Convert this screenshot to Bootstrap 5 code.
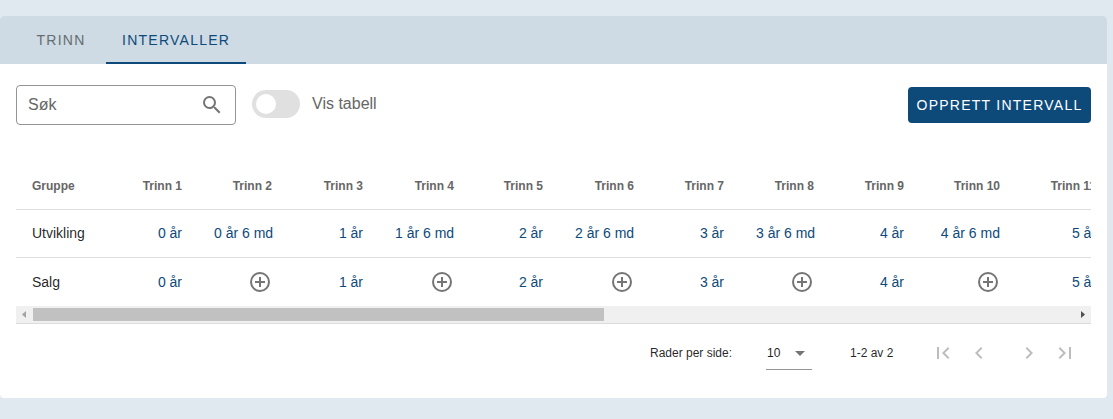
<!DOCTYPE html>
<html lang="no">
<head>
<meta charset="utf-8">
<meta name="viewport" content="width=device-width, initial-scale=1">
<title>Intervaller</title>
<link href="https://cdn.jsdelivr.net/npm/bootstrap@5.3.0/dist/css/bootstrap.min.css" rel="stylesheet">
<style>
  body { background: #e1e9f0; font-family: "Liberation Sans", Arial, sans-serif; color: rgba(0,0,0,.87); overflow: hidden; }
  .panel { width: 1107px; height: 382px; margin-top: 16px; border-radius: 4px; overflow: hidden; }
  .tabbar { height: 48px; background: #cedbe4; }
  .tabbar .nav-link { min-width: 90px; height: 48px; line-height: 48px; padding: 0 16px; text-align: center; font-size: 14px; letter-spacing: 1.25px; color: #666c70; border-radius: 0; }
  .tabbar .nav-link.active { width: 140px; color: #0d4a7a; box-shadow: inset 0 -2px #0d4a7a; }
  .toolbar-row { padding: 21px 16px 0; height: 97px; }
  .search { width: 220px; height: 40px; border: 1px solid #949494; border-radius: 4px; padding: 0 11px; }
  .search input { font-size: 16px; width: 150px; height: 36px; }
  .search input::placeholder { color: #666; opacity: 1; }
  .switch { width: 48px; height: 28px; border-radius: 14px; background: #e0e0e0; padding: 4px; margin: 5px 12px 0 16px; }
  .knob { width: 20px; height: 20px; border-radius: 50%; background: #fff; }
  .switch-label { color: #666; font-size: 16px; line-height: 24px; margin-top: 7px; }
  .btn-create { height: 36px; padding: 0 8px; background: #0d4a7a; color: #fff; border: 0; border-radius: 4px; font-size: 14px; letter-spacing: 1.25px; width: 183px; margin-top: 2px; white-space: nowrap; }
  .btn-create:hover { background: #0d4a7a; color: #fff; }
  .grid-wrap { margin: 0 16px; width: 1075px; border-bottom: 1px solid #dcdcdc; }
  .grid { table-layout: fixed; width: 1096px; border-collapse: separate; border-spacing: 0; font-size: 14px; }
  .grid th, .grid td { height: 48px; padding: 0 16px; text-align: right; white-space: nowrap; vertical-align: middle; border-bottom: 1px solid #dedede; color: #0d4a7a; }
  .grid th { font-size: 12px; font-weight: 700; color: #666; height: 49px; padding-top: 2px; }
  .grid td:first-child, .grid th:first-child { text-align: left; }
  .grid td:first-child { color: rgba(0,0,0,.87); }
  .grid tr:last-child td { border-bottom: 0; }
  .grid td svg { width: 24px; height: 24px; fill: #757575; display: block; margin-left: auto; }
  .track { height: 17px; background: #f0f0f0; }
  .track svg { width: 17px; height: 17px; }
  .thumb { width: 571px; height: 13px; background: #c1c1c1; }
  .pager { height: 74px; padding: 0 16px 0 650px; font-size: 12px; }
  .pager > * { height: 58px; display: flex; align-items: center; }
  .per-page { width: 116px; }
  .rows-select { width: 46px; height: 34px; border-bottom: 1px solid #949494; padding-left: 1px; color: #1f1f1f; }
  .pager svg { width: 24px; height: 24px; fill: #bdbdbd; }
  .pager .rows-select svg { fill: #757575; }
  .range { margin-left: 38px; width: 81px; }
  .arrows svg:nth-child(2) { margin-left: 12px; }
  .arrows svg:nth-child(3) { margin-left: 26px; }
  .arrows svg:nth-child(4) { margin-left: 12px; }
</style>
</head>
<body>
<svg class="d-none">
  <symbol id="plus" viewBox="0 0 24 24"><path d="M11 11V7h2v4h4v2h-4v4h-2v-4H7v-2zM12 2a10 10 0 1 0 0 20 10 10 0 0 0 0-20zm0 18a8 8 0 1 1 0-16 8 8 0 0 1 0 16z"/></symbol>
</svg>
<main class="panel bg-white">
  <nav class="nav tabbar px-3">
    <a class="nav-link" href="#">TRINN</a>
    <a class="nav-link active" href="#">INTERVALLER</a>
  </nav>
  <div class="toolbar-row d-flex align-items-start">
    <div class="search d-flex align-items-center justify-content-between">
      <input class="border-0 p-0 bg-transparent" type="text" placeholder="Søk" aria-label="Søk">
      <svg width="24" height="24" viewBox="0 0 24 24" fill="#757575"><path d="M15.5 14h-.79l-.28-.27A6.47 6.47 0 0 0 16 9.5 6.5 6.5 0 1 0 9.5 16c1.61 0 3.09-.59 4.23-1.57l.27.28v.79l5 4.99L20.49 19l-4.99-5zm-6 0C7.01 14 5 11.99 5 9.5S7.01 5 9.5 5 14 7.01 14 9.5 11.99 14 9.5 14z"/></svg>
    </div>
    <div class="switch"><div class="knob"></div></div>
    <span class="switch-label">Vis tabell</span>
    <button class="btn btn-create ms-auto" type="button">OPPRETT INTERVALL</button>
  </div>
  <div class="grid-wrap overflow-hidden">
    <table class="grid">
      <colgroup>
        <col style="width:91px"><col style="width:91px"><col style="width:90px"><col style="width:91px"><col style="width:91px"><col style="width:89px"><col style="width:91px"><col style="width:90px"><col style="width:90px"><col style="width:90px"><col style="width:96px"><col style="width:96px">
      </colgroup>
      <thead>
        <tr><th>Gruppe</th><th>Trinn 1</th><th>Trinn 2</th><th>Trinn 3</th><th>Trinn 4</th><th>Trinn 5</th><th>Trinn 6</th><th>Trinn 7</th><th>Trinn 8</th><th>Trinn 9</th><th>Trinn 10</th><th>Trinn 11</th></tr>
      </thead>
      <tbody>
        <tr><td>Utvikling</td><td>0 år</td><td>0 år 6 md</td><td>1 år</td><td>1 år 6 md</td><td>2 år</td><td>2 år 6 md</td><td>3 år</td><td>3 år 6 md</td><td>4 år</td><td>4 år 6 md</td><td>5 år</td></tr>
        <tr><td>Salg</td><td>0 år</td><td><svg><use href="#plus"/></svg></td><td>1 år</td><td><svg><use href="#plus"/></svg></td><td>2 år</td><td><svg><use href="#plus"/></svg></td><td>3 år</td><td><svg><use href="#plus"/></svg></td><td>4 år</td><td><svg><use href="#plus"/></svg></td><td>5 år</td></tr>
      </tbody>
    </table>
    <div class="track d-flex align-items-center">
      <svg viewBox="0 0 17 17" fill="#a3a3a3"><path d="M10 5v7L6 8.5z"/></svg>
      <div class="thumb"></div>
      <svg class="ms-auto" viewBox="0 0 17 17" fill="#505050"><path d="M7 5v7l4-3.5z"/></svg>
    </div>
  </div>
  <div class="pager d-flex">
    <span class="per-page">Rader per side:</span>
    <div><div class="rows-select d-flex align-items-center justify-content-between"><span>10</span><svg viewBox="0 0 24 24"><path d="M7 10l5 5 5-5z"/></svg></div></div>
    <span class="range">1-2 av 2</span>
    <div class="arrows">
      <svg viewBox="0 0 24 24"><path d="M18.41 16.59 13.82 12l4.59-4.59L17 6l-6 6 6 6zM6 6h2v12H6z"/></svg>
      <svg viewBox="0 0 24 24"><path d="M15.41 7.41 14 6l-6 6 6 6 1.41-1.41L10.83 12z"/></svg>
      <svg viewBox="0 0 24 24"><path d="M10 6 8.59 7.41 13.17 12l-4.58 4.59L10 18l6-6z"/></svg>
      <svg viewBox="0 0 24 24"><path d="M5.59 7.41 10.18 12l-4.59 4.59L7 18l6-6-6-6zM16 6h2v12h-2z"/></svg>
    </div>
  </div>
</main>
<script src="https://cdn.jsdelivr.net/npm/bootstrap@5.3.0/dist/js/bootstrap.bundle.min.js"></script>
</body>
</html>
